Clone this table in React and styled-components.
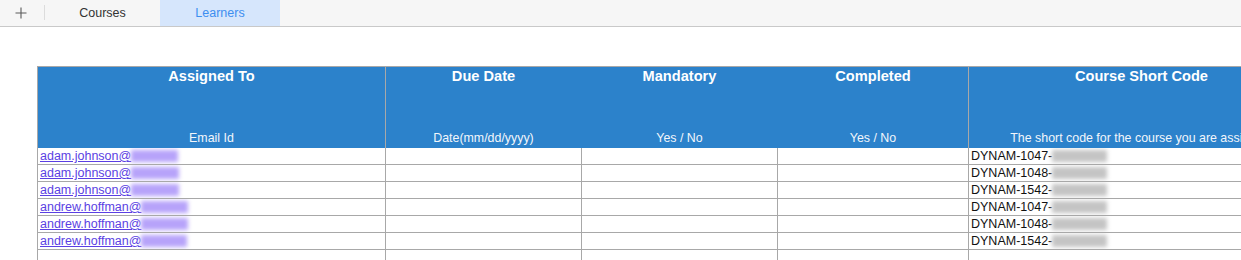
import React from "react";
import styled, { createGlobalStyle } from "styled-components";

const GlobalStyle = createGlobalStyle`
  html, body {
    margin: 0;
    padding: 0;
    background: #ffffff;
    overflow: hidden;
    font-family: "Liberation Sans", Arial, Helvetica, sans-serif;
  }
`;

const COLUMNS = [
  { title: "Assigned To", hint: "Email Id", width: 348, divider: true },
  { title: "Due Date", hint: "Date(mm/dd/yyyy)", width: 196, divider: false },
  { title: "Mandatory", hint: "Yes / No", width: 196, divider: false },
  { title: "Completed", hint: "Yes / No", width: 191, divider: true },
  {
    title: "Course Short Code",
    hint: "The short code for the course you are assigning",
    width: 346,
    divider: true,
  },
];

const ROWS = [
  { user: "adam.johnson@", blur: 47, code: "DYNAM-1047-" },
  { user: "adam.johnson@", blur: 48, code: "DYNAM-1048-" },
  { user: "adam.johnson@", blur: 48, code: "DYNAM-1542-" },
  { user: "andrew.hoffman@", blur: 47, code: "DYNAM-1047-" },
  { user: "andrew.hoffman@", blur: 47, code: "DYNAM-1048-" },
  { user: "andrew.hoffman@", blur: 46, code: "DYNAM-1542-" },
  { user: "", blur: 0, code: "" },
];

const gridCols = COLUMNS.map((c) => `${c.width}px`).join(" ");

function App() {
  return (
    <>
      <GlobalStyle />
      <TabBar>
        <AddButton>
          <svg width="12" height="12" viewBox="0 0 12 12">
            <path d="M6 0.5V11.5M0.5 6H11.5" stroke="#5a5a5a" strokeWidth="1.1" fill="none" />
          </svg>
        </AddButton>
        <Separator />
        <Tab>Courses</Tab>
        <Tab active>Learners</Tab>
      </TabBar>

      <Sheet>
        <Grid>
          <Row $cols={gridCols}>
            {COLUMNS.map((col) => (
              <HeadCell key={col.title} $divider={col.divider}>
                <HeadTitle>{col.title}</HeadTitle>
                <HeadHint>{col.hint}</HeadHint>
              </HeadCell>
            ))}
          </Row>
          {ROWS.map((row, i) => (
            <Row key={i} $cols={gridCols}>
              <Cell>
                {row.user && (
                  <EmailLink href="#">
                    {row.user}
                    <Blurred $tone="violet" style={{ width: row.blur }} />
                  </EmailLink>
                )}
              </Cell>
              <Cell />
              <Cell />
              <Cell />
              <Cell>
                {row.code && (
                  <>
                    {row.code}
                    <Blurred $tone="gray" style={{ width: 55 }} />
                  </>
                )}
              </Cell>
            </Row>
          ))}
        </Grid>
      </Sheet>
    </>
  );
}

export default App;

const TabBar = styled.div`
  display: flex;
  align-items: stretch;
  height: 26px;
  background: #f6f6f6;
  border-bottom: 1px solid #c9c9c9;
`;

const AddButton = styled.div`
  width: 44px;
  display: flex;
  align-items: center;
  justify-content: center;
  padding-right: 2px;
  box-sizing: border-box;
`;

const Separator = styled.div`
  width: 1px;
  height: 15px;
  margin-top: 5px;
  background: #dcdcdc;
`;

const Tab = styled.div`
  width: ${({ active }) => (active ? "120px" : "115px")};
  display: flex;
  align-items: center;
  justify-content: center;
  font-size: 12.5px;
  color: ${({ active }) => (active ? "#3d8ef0" : "#333333")};
  background: ${({ active }) => (active ? "#d6e6fc" : "transparent")};
`;

const Sheet = styled.div`
  padding: 39px 0 0 37px;
`;

const Grid = styled.div`
  width: max-content;
  border-top: 1px solid #a8a8a8;
  border-left: 1px solid #a8a8a8;
`;

const Row = styled.div`
  display: grid;
  grid-template-columns: ${({ $cols }) => $cols};
`;

const HeadCell = styled.div`
  height: 81px;
  box-sizing: border-box;
  background: #2c82cb;
  color: #ffffff;
  border-right: 1px solid ${({ $divider }) => ($divider ? "#a8a8a8" : "#2c82cb")};
  display: flex;
  flex-direction: column;
  justify-content: space-between;
  align-items: center;
  padding: 0 0 2px;
  white-space: nowrap;
  overflow: hidden;
`;

const HeadTitle = styled.div`
  font-size: 14.6px;
  font-weight: bold;
  line-height: 18px;
`;

const HeadHint = styled.div`
  font-size: 12.4px;
  line-height: 15px;
  color: #f2f6fb;
`;

const Cell = styled.div`
  height: 17px;
  box-sizing: border-box;
  border-right: 1px solid #a8a8a8;
  border-bottom: 1px solid #a8a8a8;
  padding: 0 0 0 2px;
  font-size: 12.5px;
  line-height: 16px;
  color: #111111;
  white-space: nowrap;
  overflow: hidden;
  display: flex;
  align-items: center;
`;

const EmailLink = styled.a`
  color: #5b3fe3;
  text-decoration: underline;
  display: inline-flex;
  align-items: center;
`;

const Blurred = styled.span`
  display: inline-block;
  height: 12px;
  background: ${({ $tone }) => ($tone === "violet" ? "#b7a3fa" : "#c4c4c4")};
  filter: blur(2px);
`;
